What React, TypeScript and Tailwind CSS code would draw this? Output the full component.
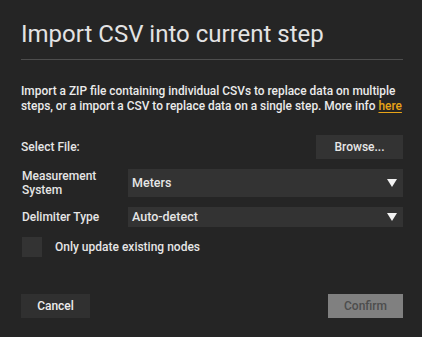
import { useState } from 'react';

function SelectBox({ value, height }: { value: string; height: string }) {
  return (
    <div className={`flex-1 flex items-center justify-between bg-[#333333] pl-[4px] pr-[6px] ${height}`}>
      <span className="text-[12.5px] font-medium text-[#e6e6e6]">{value}</span>
      <svg width="10" height="8" viewBox="0 0 10 8">
        <polygon points="0,0 10,0 5,8" fill="#f2f2f2" />
      </svg>
    </div>
  );
}

export default function App() {
  const [onlyExisting, setOnlyExisting] = useState(false);

  return (
    <div className="w-[422px] h-[337px] bg-[#252525] pl-[21px] pr-[19px] pt-[18px] font-['Roboto',sans-serif] text-[#e6e6e6]">
      <h1 className="text-[24px] leading-8 font-normal text-[#e3e3e3]">Import CSV into current step</h1>
      <div className="mt-[9px] h-px bg-[#4d4d4d]" />

      <p className="mt-[24px] -mr-[4px] text-[11.9px] leading-[15px] font-medium text-[#ebebeb]">
        Import a ZIP file containing individual CSVs to replace data on multiple steps, or a import a CSV to replace
        data on a single step. More info{' '}
        <a className="text-[#e8a317] underline underline-offset-2">here</a>
      </p>

      {/* Form fields */}
      <div className="mt-[21px] flex items-center justify-between">
        <span className="text-[12px] font-medium">Select File:</span>
        <button className="w-[87px] h-[24px] bg-[#333333] text-[12px] font-medium text-[#e6e6e6]">Browse...</button>
      </div>

      <div className="mt-[10px] flex items-center">
        <span className="w-[107px] pl-px text-[12px] leading-[14px] font-medium">
          Measurement
          <br />
          System
        </span>
        <SelectBox value="Meters" height="h-[28px]" />
      </div>

      <div className="mt-[10px] flex items-center">
        <span className="w-[107px] pl-px text-[12px] font-medium">Delimiter Type</span>
        <SelectBox value="Auto-detect" height="h-[20px]" />
      </div>

      <label className="mt-[10px] flex items-center gap-[13px] pl-px cursor-pointer">
        <span
          onClick={() => setOnlyExisting(!onlyExisting)}
          className="w-[20px] h-[20px] bg-[#333333] flex items-center justify-center text-[12px]"
        >
          {onlyExisting ? '✓' : ''}
        </span>
        <span className="text-[12px] font-medium">Only update existing nodes</span>
      </label>

      {/* Actions */}
      <div className="mt-[37px] flex items-center justify-between">
        <button className="w-[69px] h-[24px] bg-[#303030] text-[12px] font-medium text-[#ececec]">Cancel</button>
        <button disabled className="w-[75px] h-[24px] bg-[#808080] text-[12px] font-medium text-[#4d4d4d]">
          Confirm
        </button>
      </div>
    </div>
  );
}
